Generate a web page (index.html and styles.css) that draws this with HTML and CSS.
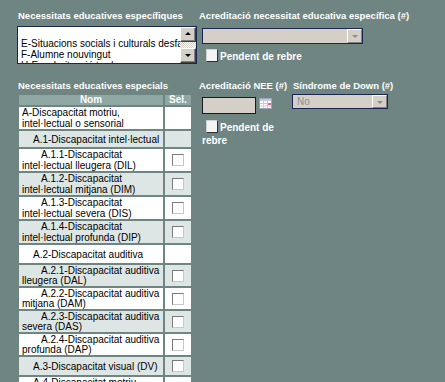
FILE: index.html
```html
<!DOCTYPE html>
<html lang="ca">
<head>
  <meta charset="UTF-8" />
  <title>Necessitats educatives</title>
  <link rel="stylesheet" href="styles.css">
</head>
<body>
  <div class="fitxa">
    <div class="bloc">
      <div class="col-esq">
        <label class="etiqueta">Necessitats educatives específiques</label>
        <div class="llista">
          <div class="opcions">
            <div class="opcio">&nbsp;</div>
            <div class="opcio">E-Situacions socials i culturals desfavorides</div>
            <div class="opcio">F-Alumne nouvingut</div>
            <div class="opcio">H-Escolarització tardana</div>
          </div>
          <div class="barra">
            <span class="boto amunt"></span>
            <span class="pista"></span>
            <span class="boto avall"></span>
          </div>
        </div>
      </div>
      <div class="col-dreta">
        <label class="etiqueta">Acreditació necessitat educativa específica (#)</label>
        <div class="desplegable llarg"><span class="valor"></span><span class="fletxa"></span></div>
        <div class="pendent"><span class="casella gran"></span>Pendent de rebre</div>
      </div>
    </div>

    <div class="bloc segon">
      <div class="col-esq">
        <label class="etiqueta">Necessitats educatives especials</label>
        <table class="nee">
          <thead>
            <tr><th class="nom">Nom</th><th class="sel">Sel.</th></tr>
          </thead>
          <tbody>
            <tr class="doble"><td>A-Discapacitat motriu,<br>intel·lectual o sensorial</td><td></td></tr>
            <tr class="curt"><td class="n2">A.1-Discapacitat intel·lectual</td><td></td></tr>
            <tr class="doble"><td class="n3">A.1.1-Discapacitat<br>intel·lectual lleugera (DIL)</td><td class="sel"><span class="casella"></span></td></tr>
            <tr class="doble"><td class="n3">A.1.2-Discapacitat<br>intel·lectual mitjana (DIM)</td><td class="sel"><span class="casella"></span></td></tr>
            <tr class="doble"><td class="n3">A.1.3-Discapacitat<br>intel·lectual severa (DIS)</td><td class="sel"><span class="casella"></span></td></tr>
            <tr class="doble"><td class="n3">A.1.4-Discapacitat<br>intel·lectual profunda (DIP)</td><td class="sel"><span class="casella"></span></td></tr>
            <tr class="mig"><td class="n2">A.2-Discapacitat auditiva</td><td></td></tr>
            <tr class="doble2"><td class="n3">A.2.1-Discapacitat auditiva<br>lleugera (DAL)</td><td class="sel"><span class="casella"></span></td></tr>
            <tr class="doble2"><td class="n3">A.2.2-Discapacitat auditiva<br>mitjana (DAM)</td><td class="sel"><span class="casella"></span></td></tr>
            <tr class="doble2"><td class="n3">A.2.3-Discapacitat auditiva<br>severa (DAS)</td><td class="sel"><span class="casella"></span></td></tr>
            <tr class="doble2"><td class="n3">A.2.4-Discapacitat auditiva<br>profunda (DAP)</td><td class="sel"><span class="casella"></span></td></tr>
            <tr class="visual"><td class="n2">A.3-Discapacitat visual (DV)</td><td class="sel"><span class="casella"></span></td></tr>
            <tr class="doble"><td class="n2">A.4-Discapacitat motriu<br>(DM)</td><td class="sel"><span class="casella"></span></td></tr>
          </tbody>
        </table>
      </div>
      <div class="col-nee">
        <label class="etiqueta">Acreditació NEE (#)</label>
        <div class="data">
          <span class="camp"></span>
          <svg class="calendari" width="13" height="11" viewBox="0 0 13 11">
            <rect x="0.5" y="0.5" width="12" height="10" fill="#fff" stroke="#a0a0b8"/>
            <rect x="1" y="1" width="11" height="2" fill="#c4c8e8"/>
            <path d="M1 5.5h11M1 8h11M4.5 3v7M8.5 3v7" stroke="#ccccd8" stroke-width="1"/>
            <rect x="9" y="5" width="3" height="2" fill="#e06a86"/>
          </svg>
        </div>
        <div class="pendent estret"><span class="casella gran"></span>Pendent de rebre</div>
      </div>
      <div class="col-down">
        <label class="etiqueta">Síndrome de Down (#)</label>
        <div class="desplegable curt-sel"><span class="valor">No</span><span class="fletxa"></span></div>
      </div>
    </div>
  </div>
</body>
</html>
```

FILE: styles.css
```css
body {
  margin: 0;
  background: #6e8581;
  font-family: 'Liberation Sans', Arial, sans-serif;
  font-size: 10px;
  color: #000;
}
.fitxa {
  padding: 10px 0 0 18px;
}
.bloc {
  display: flex;
  align-items: flex-start;
}
.segon {
  margin-top: 16px;
}
.col-esq {
  width: 179px;
  margin-right: 2px;
}
.etiqueta {
  display: block;
  color: #fff;
  font-weight: bold;
  font-size: 9.5px;
  line-height: 12px;
  white-space: nowrap;
}

/* llista de selecció múltiple */
.llista {
  display: flex;
  margin: 4px 0 0 -1px;
  height: 38px;
  box-sizing: border-box;
  border: 1px solid #1c2550;
  background: #fff;
}
.opcions {
  flex: 1;
  overflow: hidden;
  padding: 0 0 0 3px;
  white-space: nowrap;
  font-size: 10px;
  line-height: 11px;
}
.barra {
  width: 16px;
  display: flex;
  flex-direction: column;
}
.boto {
  position: relative;
  height: 15px;
  box-sizing: border-box;
  background: #d4d0c8;
  border: 1px solid;
  border-color: #fff #404040 #404040 #fff;
  box-shadow: inset -1px -1px #808080;
}
.boto::after {
  content: "";
  position: absolute;
  left: 4px;
  border-left: 3px solid transparent;
  border-right: 3px solid transparent;
}
.amunt::after {
  top: 4px;
  border-bottom: 3px solid #000;
}
.avall::after {
  top: 5px;
  border-top: 3px solid #000;
}
.pista {
  flex: 1;
  background: repeating-conic-gradient(#fff 0 25%, #d4d0c8 0 50%) 0 0 / 2px 2px;
}

/* desplegables */
.desplegable {
  display: flex;
  box-sizing: border-box;
  border: 1px solid #1c2550;
  background: #d4d0c8;
}
.llarg {
  width: 161px;
  height: 16px;
  margin: 6px 0 0 3px;
}
.curt-sel {
  width: 96px;
  height: 15px;
  margin-top: 2px;
}
.valor {
  flex: 1;
  color: #8c8c8c;
  padding-left: 4px;
  line-height: 13px;
}
.fletxa {
  position: relative;
  width: 15px;
  box-sizing: border-box;
  background: #d4d0c8;
  border: 1px solid;
  border-color: #fff #808080 #808080 #fff;
}
.fletxa::after {
  content: "";
  position: absolute;
  left: 4px;
  top: 5px;
  border-left: 3px solid transparent;
  border-right: 3px solid transparent;
  border-top: 3px solid #8c8c8c;
}

/* caselles */
.casella {
  display: inline-block;
  width: 12px;
  height: 12px;
  box-sizing: border-box;
  background: #fff;
  border: 1px solid;
  border-color: #7a7a7a #c8c8c8 #c8c8c8 #7a7a7a;
  vertical-align: middle;
}
.casella.gran {
  height: 13px;
  background: #f4f4f4;
  border-color: #d0d0d0 #303030 #303030 #d0d0d0;
  margin: -3px 2px 0 4px;
}
.pendent {
  color: #fff;
  font-weight: bold;
  line-height: 13px;
  margin: 6px 0 0 3px;
}
.estret {
  width: 86px;
  margin-top: 7px;
}

/* taula NEE */
.nee {
  border-collapse: separate;
  border-spacing: 2px;
  margin: 1px 0 0 -1px;
  width: 176px;
  table-layout: fixed;
}
.nee th {
  background: #8ea7a2;
  color: #fff;
  font-weight: bold;
  height: 10px;
  line-height: 10px;
  padding: 0;
}
.nee th.nom {
  width: 144px;
}
.nee td {
  padding: 0 0 0 3px;
  line-height: 11px;
  vertical-align: middle;
  white-space: nowrap;
}
.nee tbody tr:nth-child(odd) td {
  background: #fff;
}
.nee tbody tr:nth-child(even) td {
  background: #dde6e4;
}
.nee td.sel {
  text-align: center;
  padding: 0;
}
.nee td.n2 {
  text-indent: 11px;
}
.nee td.n3 {
  text-indent: 19px;
}
.doble td {
  height: 22px;
}
.doble2 td {
  height: 21px;
  line-height: 10px;
}
.curt td {
  height: 16px;
}
.mig td {
  height: 18px;
}
.visual td {
  height: 18px;
}

/* columna NEE i Down */
.col-nee {
  width: 91px;
  margin-right: 2px;
}
.data {
  display: flex;
  align-items: flex-start;
  margin: 5px 0 0 3px;
}
.camp {
  width: 54px;
  height: 17px;
  box-sizing: border-box;
  border: 1px solid #1a1a1a;
  background: #d4d0c8;
}
.calendari {
  margin: 1px 0 0 3px;
}
.col-down .etiqueta {
  padding-left: 1px;
}
```
